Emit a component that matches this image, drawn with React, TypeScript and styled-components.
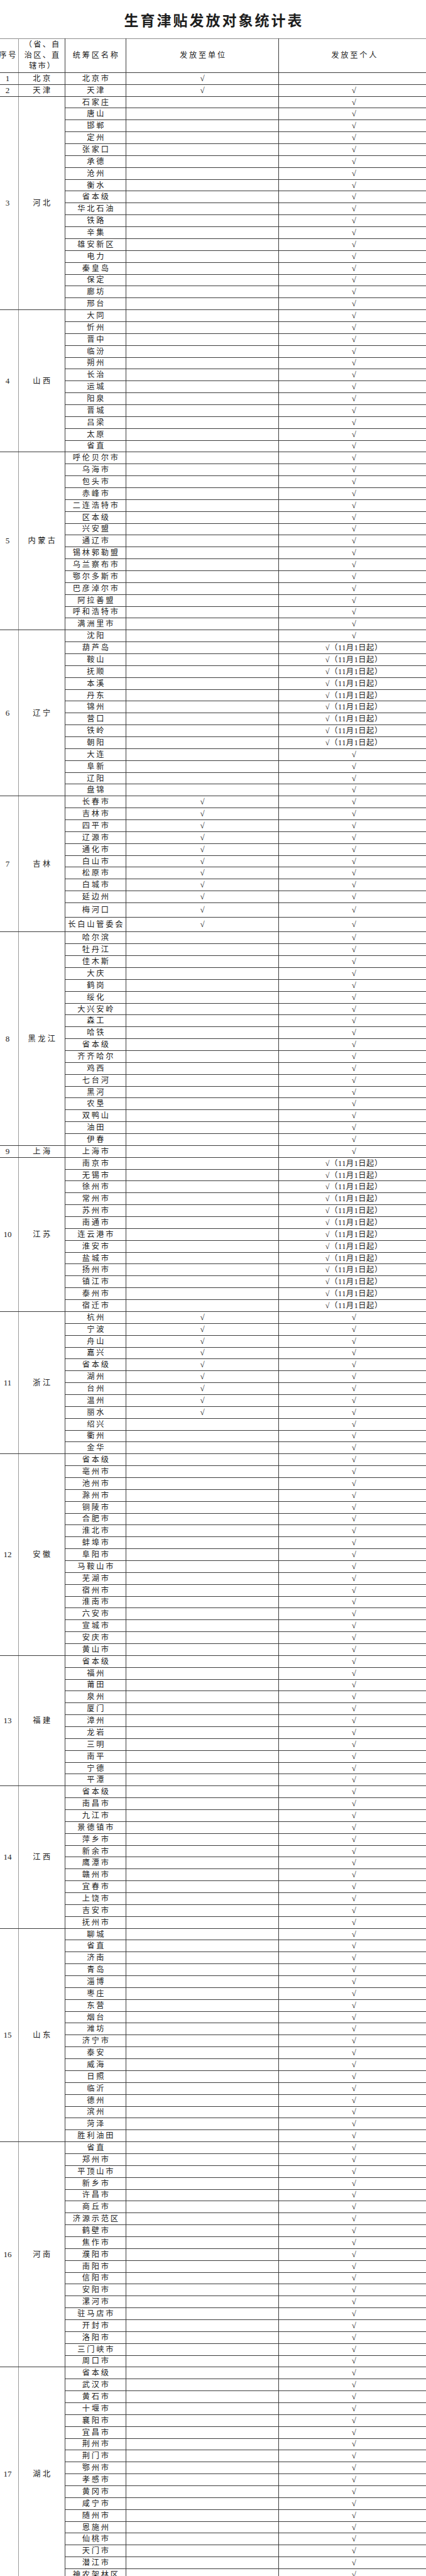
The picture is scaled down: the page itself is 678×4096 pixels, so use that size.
import styled, { createGlobalStyle } from "styled-components";

type Person = "y" | "n" | "nov";

interface Group {
  no: number;
  name: string;
  areas: string[];
  unit?: number;
  person?: Person;
  nov?: string[];
  tall?: string[];
}

const groups: Group[] = [
  { no: 1, name: "北京", areas: ["北京市"], unit: 1, person: "n" },
  { no: 2, name: "天津", areas: ["天津"], unit: 1 },
  {
    no: 3,
    name: "河北",
    areas: ["石家庄", "唐山", "邯郸", "定州", "张家口", "承德", "沧州", "衡水", "省本级", "华北石油", "铁路", "辛集", "雄安新区", "电力", "秦皇岛", "保定", "廊坊", "邢台"],
  },
  {
    no: 4,
    name: "山西",
    areas: ["大同", "忻州", "晋中", "临汾", "朔州", "长治", "运城", "阳泉", "晋城", "吕梁", "太原", "省直"],
  },
  {
    no: 5,
    name: "内蒙古",
    areas: ["呼伦贝尔市", "乌海市", "包头市", "赤峰市", "二连浩特市", "区本级", "兴安盟", "通辽市", "锡林郭勒盟", "乌兰察布市", "鄂尔多斯市", "巴彦淖尔市", "阿拉善盟", "呼和浩特市", "满洲里市"],
  },
  {
    no: 6,
    name: "辽宁",
    areas: ["沈阳", "葫芦岛", "鞍山", "抚顺", "本溪", "丹东", "锦州", "营口", "铁岭", "朝阳", "大连", "阜新", "辽阳", "盘锦"],
    nov: ["葫芦岛", "鞍山", "抚顺", "本溪", "丹东", "锦州", "营口", "铁岭", "朝阳"],
  },
  {
    no: 7,
    name: "吉林",
    areas: ["长春市", "吉林市", "四平市", "辽源市", "通化市", "白山市", "松原市", "白城市", "延边州", "梅河口", "长白山管委会"],
    unit: 11,
    tall: ["梅河口", "长白山管委会"],
  },
  {
    no: 8,
    name: "黑龙江",
    areas: ["哈尔滨", "牡丹江", "佳木斯", "大庆", "鹤岗", "绥化", "大兴安岭", "森工", "哈铁", "省本级", "齐齐哈尔", "鸡西", "七台河", "黑河", "农垦", "双鸭山", "油田", "伊春"],
  },
  { no: 9, name: "上海", areas: ["上海市"] },
  {
    no: 10,
    name: "江苏",
    areas: ["南京市", "无锡市", "徐州市", "常州市", "苏州市", "南通市", "连云港市", "淮安市", "盐城市", "扬州市", "镇江市", "泰州市", "宿迁市"],
    person: "nov",
  },
  {
    no: 11,
    name: "浙江",
    areas: ["杭州", "宁波", "舟山", "嘉兴", "省本级", "湖州", "台州", "温州", "丽水", "绍兴", "衢州", "金华"],
    unit: 9,
  },
  {
    no: 12,
    name: "安徽",
    areas: ["省本级", "亳州市", "池州市", "滁州市", "铜陵市", "合肥市", "淮北市", "蚌埠市", "阜阳市", "马鞍山市", "芜湖市", "宿州市", "淮南市", "六安市", "宣城市", "安庆市", "黄山市"],
  },
  {
    no: 13,
    name: "福建",
    areas: ["省本级", "福州", "莆田", "泉州", "厦门", "漳州", "龙岩", "三明", "南平", "宁德", "平潭"],
  },
  {
    no: 14,
    name: "江西",
    areas: ["省本级", "南昌市", "九江市", "景德镇市", "萍乡市", "新余市", "鹰潭市", "赣州市", "宜春市", "上饶市", "吉安市", "抚州市"],
  },
  {
    no: 15,
    name: "山东",
    areas: ["聊城", "省直", "济南", "青岛", "淄博", "枣庄", "东营", "烟台", "潍坊", "济宁市", "泰安", "威海", "日照", "临沂", "德州", "滨州", "菏泽", "胜利油田"],
  },
  {
    no: 16,
    name: "河南",
    areas: ["省直", "郑州市", "平顶山市", "新乡市", "许昌市", "商丘市", "济源示范区", "鹤壁市", "焦作市", "濮阳市", "南阳市", "信阳市", "安阳市", "漯河市", "驻马店市", "开封市", "洛阳市", "三门峡市", "周口市"],
  },
  {
    no: 17,
    name: "湖北",
    areas: ["省本级", "武汉市", "黄石市", "十堰市", "襄阳市", "宜昌市", "荆州市", "荆门市", "鄂州市", "孝感市", "黄冈市", "咸宁市", "随州市", "恩施州", "仙桃市", "天门市", "潜江市", "神农架林区"],
  },
];

const colWidths = [34.8, 73.9, 97.3, 243.3, 239];

const personMark = (g: Group, area: string) => {
  const kind: Person = g.nov?.includes(area) ? "nov" : g.person ?? "y";
  if (kind === "n") return "";
  if (kind === "nov") return "√（11月1日起）";
  return "√";
};

const App = () => {
  return (
    <Page>
      <GlobalStyle />
      <Title>生育津贴发放对象统计表</Title>
      <Sheet>
        <colgroup>
          {colWidths.map((w, i) => (
            <Col key={i} $w={w} />
          ))}
        </colgroup>
        <thead>
          <HeadRow>
            <HeadCell>序号</HeadCell>
            <HeadCell $side>
              （省、自
              <br />
              治区、直
              <br />
              辖市）
            </HeadCell>
            <HeadCell>统筹区名称</HeadCell>
            <HeadCell>发放至单位</HeadCell>
            <HeadCell>发放至个人</HeadCell>
          </HeadRow>
        </thead>
        <tbody>
          {groups.map((g) =>
            g.areas.map((area, i) => (
              <Row key={g.no + area} $tall={!!g.tall?.includes(area)}>
                {i === 0 && <IndexCell rowSpan={g.areas.length}>{g.no}</IndexCell>}
                {i === 0 && <ProvinceCell rowSpan={g.areas.length}>{g.name}</ProvinceCell>}
                <AreaCell>{area}</AreaCell>
                <MarkCell>{i < (g.unit ?? 0) ? "√" : ""}</MarkCell>
                <MarkCell $note={personMark(g, area).length > 1}>{personMark(g, area)}</MarkCell>
              </Row>
            ))
          )}
        </tbody>
      </Sheet>
    </Page>
  );
};

const GlobalStyle = createGlobalStyle`
  html, body {
    margin: 0;
    padding: 0;
    background: #ffffff;
    overflow-x: hidden;
  }
`;

const Page = styled.div`
  width: 678px;
  overflow: hidden;
  color: #222;
  font-family: "Liberation Serif", "Noto Sans CJK SC", serif;
`;

const Title = styled.h1`
  margin: 0;
  height: 61.4px;
  display: flex;
  align-items: center;
  justify-content: center;
  padding-left: 3px;
  font-family: "Noto Sans CJK SC", sans-serif;
  font-size: 23px;
  font-weight: 700;
  letter-spacing: 3px;
  color: #1e1e1e;
`;

const Sheet = styled.table`
  margin-left: -6px;
  width: 688.3px;
  table-layout: fixed;
  border-collapse: collapse;
  border-top: 1px solid #8c8c8c;
`;

const Col = styled.col<{ $w: number }>`
  width: ${({ $w }) => $w}px;
`;

const HeadRow = styled.tr`
  height: 53.5px;
`;

const HeadCell = styled.th<{ $side?: boolean }>`
  padding: 0 0 0 2.8px;
  border: 1px solid #3c3c3c;
  border-top-color: #8c8c8c;
  font-weight: 400;
  font-size: 12.2px;
  letter-spacing: ${({ $side }) => ($side ? "2.2px" : "2.8px")};
  line-height: 17.4px;
  text-align: center;
  vertical-align: middle;
  white-space: nowrap;
  &:first-child {
    border-right-color: #9a9a9a;
  }
`;

const Row = styled.tr<{ $tall: boolean }>`
  height: ${({ $tall }) => ($tall ? "23.2px" : "18.866px")};
`;

const Cell = styled.td`
  padding: 0;
  border: 1px solid #3c3c3c;
  font-size: 12.2px;
  line-height: 14px;
  text-align: center;
  vertical-align: middle;
  white-space: nowrap;
  overflow: hidden;
`;

const IndexCell = styled(Cell)`
  font-size: 13px;
  border-right-color: #9a9a9a;
`;

const ProvinceCell = styled(Cell)`
  padding-left: 3.4px;
  letter-spacing: 3.4px;
`;

const AreaCell = styled(Cell)`
  padding-left: 2.8px;
  letter-spacing: 2.8px;
`;

const MarkCell = styled(Cell)<{ $note?: boolean }>`
  font-size: ${({ $note }) => ($note ? "12.2px" : "13px")};
  letter-spacing: ${({ $note }) => ($note ? "0.6px" : "0")};
`;

export default App;
